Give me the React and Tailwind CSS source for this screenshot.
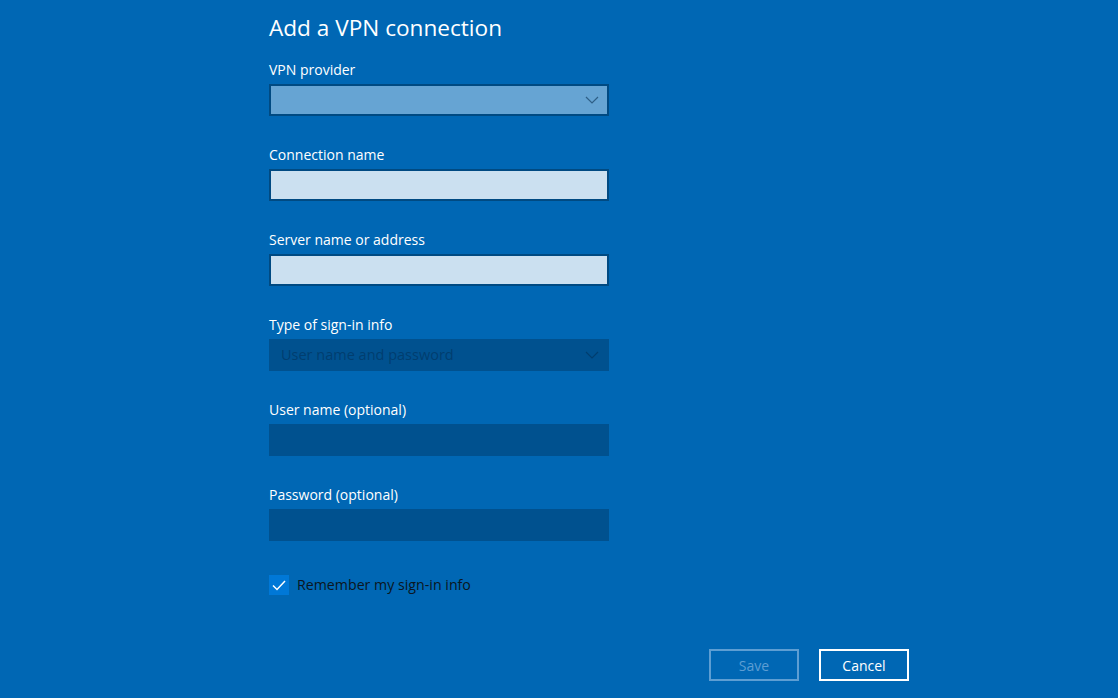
const fields = [
  { label: 'Connection name', kind: 'text' },
  { label: 'Server name or address', kind: 'text' },
  { label: 'Type of sign-in info', kind: 'disabledSelect', value: 'User name and password' },
  { label: 'User name (optional)', kind: 'disabled' },
  { label: 'Password (optional)', kind: 'disabled' },
];

const Chevron = ({ color }) => (
  <svg width="14" height="8" viewBox="0 0 14 8" fill="none">
    <path d="M1 1l6 6 6-6" stroke={color} strokeWidth="1.2" />
  </svg>
);

const Field = ({ kind, value }) => {
  if (kind === 'text') {
    return <div className="w-[340px] h-[32px] border-2 border-[#004a82] bg-[#cbe0f0]" />;
  }
  if (kind === 'disabledSelect') {
    return (
      <div className="w-[340px] h-[32px] bg-[#00518f] flex items-center justify-between pl-[12px] pr-[10px]">
        <span className="text-[14.5px] leading-[20px] -mt-[1px] text-[#003e6f]">{value}</span>
        <Chevron color="#003e6f" />
      </div>
    );
  }
  return <div className="w-[340px] h-[32px] bg-[#00518f]" />;
};

export default function App() {
  return (
    <div
      className="w-[1118px] h-[698px] bg-[#0067b4] overflow-hidden relative"
      style={{ fontFamily: '"Segoe UI", "Open Sans", "Noto Sans", sans-serif' }}
    >
      <div className="pl-[269px] pt-[12px]">
        <h1 className="text-[22.6px] leading-[32px] text-white font-normal">Add a VPN connection</h1>

        <div className="mt-[16px]">
          <div className="text-[14px] leading-[20px] text-white">VPN provider</div>
          <div className="mt-[4px] w-[340px] h-[32px] border-2 border-[#004a82] bg-[#66a4d3] flex items-center justify-end pr-[8px]">
            <Chevron color="#2f5f86" />
          </div>
        </div>

        {fields.map((f) => (
          <div key={f.label} className="mt-[29px]">
            <div className="text-[14px] leading-[20px] text-white">{f.label}</div>
            <div className="mt-[4px]">
              <Field kind={f.kind} value={f.value} />
            </div>
          </div>
        ))}

        <label className="mt-[34px] flex items-center gap-[8px]">
          <span className="w-[20px] h-[20px] bg-[#0078d7] flex items-center justify-center">
            <svg width="14" height="11" viewBox="0 0 14 11" fill="none">
              <path d="M1 5.5l4 4L13 1" stroke="white" strokeWidth="1.5" />
            </svg>
          </span>
          <span className="text-[14.2px] leading-[20px] text-[#0b1621]">Remember my sign-in info</span>
        </label>
      </div>

      <div className="absolute left-[709px] top-[649px] flex gap-[20px]">
        <button className="w-[90px] h-[32px] border-2 border-[#5d9ed3] text-[#5d9ed3] text-[14px]">Save</button>
        <button className="w-[90px] h-[32px] border-2 border-white text-white text-[14px]">Cancel</button>
      </div>
    </div>
  );
}
